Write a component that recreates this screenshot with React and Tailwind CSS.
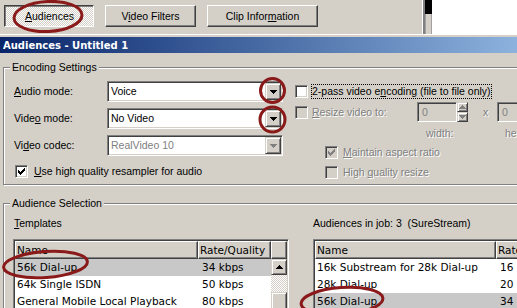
import React from "react";

const SUNKEN =
  "border border-t-[#808080] border-l-[#808080] border-b-white border-r-white shadow-[inset_1px_1px_0_#404040,inset_-1px_-1px_0_#d4d0c8]";
const RAISED =
  "border border-t-[#d4d0c8] border-l-[#d4d0c8] border-b-[#404040] border-r-[#404040] shadow-[inset_1px_1px_0_#fff,inset_-1px_-1px_0_#808080]";
const BUTTON =
  "border border-t-white border-l-white border-b-[#404040] border-r-[#404040] shadow-[inset_-1px_-1px_0_#808080]";
const HEADER =
  "border border-t-white border-l-white border-b-[#404040] border-r-[#404040] shadow-[inset_-1px_-1px_0_#808080]";
const DISABLED = "text-[#808080] [text-shadow:1px_1px_0_#fff]";
const LIST_FONT = "font-['DejaVu_Sans',Verdana,sans-serif] text-[10.5px]";

function U({ children }) {
  return <span className="underline underline-offset-[1px]">{children}</span>;
}

function DownArrow({ color = "#000" }) {
  return (
    <svg width="7" height="4" viewBox="0 0 7 4" shapeRendering="crispEdges">
      <path d="M0 0h7v1h-1v1h-1v1h-1v1h-1v-1h-1v-1h-1v-1h-1z" fill={color} />
    </svg>
  );
}

function UpArrow({ color = "#000" }) {
  return (
    <svg width="7" height="4" viewBox="0 0 7 4" shapeRendering="crispEdges">
      <path d="M3 0h1v1h1v1h1v1h1v1h-7v-1h1v-1h1v-1h1z" fill={color} />
    </svg>
  );
}

const CHECK_RECTS = [
  [6, 0, 1],
  [5, 1, 2],
  [0, 2, 1],
  [4, 2, 3],
  [0, 3, 2],
  [3, 3, 3],
  [0, 4, 5],
  [1, 5, 3],
  [2, 6, 1],
];

function Check({ checked, disabled }) {
  return (
    <span
      className={`flex h-[13px] w-[13px] shrink-0 items-center justify-center ${
        disabled ? "bg-[#d4d0c8]" : "bg-white"
      } ${SUNKEN}`}
    >
      {checked && (
        <svg width="7" height="7" viewBox="0 0 7 7" shapeRendering="crispEdges">
          {CHECK_RECTS.map(([x, y, w]) => (
            <rect
              key={`${x}-${y}`}
              x={x}
              y={y}
              width={w}
              height="1"
              fill={disabled ? "#808080" : "#000"}
            />
          ))}
        </svg>
      )}
    </span>
  );
}

function Combo({ value, disabled }) {
  return (
    <div className={`flex h-[21px] w-[176px] items-center bg-white pr-[1px] ${SUNKEN}`}>
      <span className={`flex-1 pl-[3px] ${disabled ? "text-[#808080]" : ""}`}>
        {value}
      </span>
      <span
        className={`flex h-[17px] w-[16px] items-center justify-center bg-[#d4d0c8] ${RAISED}`}
      >
        <DownArrow color={disabled ? "#808080" : "#000"} />
      </span>
    </div>
  );
}

function SpinEdit() {
  return (
    <div className="flex h-[20px]">
      <div className={`flex w-[40px] items-center bg-[#d4d0c8] pl-[4px] ${SUNKEN}`}>
        <span className="text-[#808080]">0</span>
      </div>
      <div className="flex w-[11px] flex-col">
        <span className={`flex h-[10px] items-center justify-center ${RAISED}`}>
          <UpArrow color="#808080" />
        </span>
        <span className={`flex h-[10px] items-center justify-center ${RAISED}`}>
          <DownArrow color="#808080" />
        </span>
      </div>
    </div>
  );
}

const TEMPLATES = [
  ["56k Dial-up", "34 kbps"],
  ["64k Single ISDN", "50 kbps"],
  ["General Mobile Local Playback", "80 kbps"],
];

const JOB_AUDIENCES = [
  ["16k Substream for 28k Dial-up", "16"],
  ["28k Dial-up", "20"],
  ["56k Dial-up", "34"],
];

export default function App() {
  return (
    <div className="relative h-[308px] w-[517px] overflow-hidden bg-[#d4d0c8] font-['Liberation_Sans',Arial,sans-serif] text-[10.5px] leading-[13px] text-black">
      {/* tab buttons */}
      <div className="flex h-[34px]">
        <div className="flex w-[422px] items-start gap-[11px] pl-[4px] pt-[5px]">
          <div className="flex h-[22px] w-[90px] items-center justify-center border border-t-[#404040] border-l-[#404040] border-b-white border-r-white bg-[repeating-conic-gradient(#ffffff_0_25%,#d4d0c8_0_50%)] bg-[length:2px_2px] pl-[1px] pt-[1px] shadow-[inset_1px_1px_0_#808080]">
            <span>
              <U>A</U>udiences
            </span>
          </div>
          <div className={`flex h-[22px] w-[91px] items-center justify-center ${BUTTON}`}>
            <span>
              V<U>i</U>deo Filters
            </span>
          </div>
          <div className={`flex h-[22px] w-[111px] items-center justify-center ${BUTTON}`}>
            <span>
              Clip Infor<U>m</U>ation
            </span>
          </div>
        </div>
        <div className="w-px bg-white" />
        <div className="w-[2px] bg-[#808080]" />
        <div className="flex w-[7px] flex-col">
          <div className="h-[14px] bg-black" />
          <div className="flex-1 border-x border-[#a0a0a0]" />
        </div>
        <div className="flex-1 bg-white" />
      </div>
      <div className="h-px bg-white" />
      <div className="h-[2px]" />

      {/* title bar */}
      <div className="flex h-[16px] w-[600px] items-center bg-linear-to-r from-[#0a246a] to-[#a6caf0] pl-[3px]">
        <span className="font-['DejaVu_Sans',Verdana,sans-serif] text-[10px] font-bold text-white">
          Audiences - Untitled 1
        </span>
      </div>

      {/* encoding settings */}
      <fieldset className="ml-[3px] mt-[8px] w-[560px] border border-[#808080] pb-[5px] shadow-[inset_1px_1px_0_#fff,1px_1px_0_#fff]">
        <legend className="ml-[6px] bg-[#d4d0c8] px-[2px]">Encoding Settings</legend>
        <div className="flex pt-[7px]">
          <div className="flex w-[279px] flex-col pl-[10px]">
            <div className="flex h-[21px] items-center">
              <span className="w-[93px]">
                <U>A</U>udio mode:
              </span>
              <Combo value="Voice" />
            </div>
            <div className="mt-[6px] flex h-[21px] items-center">
              <span className="w-[93px]">
                Vide<U>o</U> mode:
              </span>
              <Combo value="No Video" />
            </div>
            <div className="mt-[6px] flex h-[21px] items-center">
              <span className="w-[93px]">
                Vi<U>d</U>eo codec:
              </span>
              <Combo value="RealVideo 10" disabled />
            </div>
            <div className="mt-[9px] flex h-[13px] items-center gap-[6px] pl-[1px]">
              <Check checked />
              <span>
                <U>U</U>se high quality resampler for audio
              </span>
            </div>
          </div>

          <div className="ml-[12px] flex flex-col">
            <div className="flex h-[21px] items-center gap-[4px]">
              <Check />
              <span className="outline-1 outline-dotted outline-black">
                2-pass video e<U>n</U>coding (file to file only)
              </span>
            </div>
            <div className="flex h-[20px] items-center">
              <Check disabled />
              <span className={`ml-[4px] w-[105px] ${DISABLED}`}>
                <U>R</U>esize video to:
              </span>
              <SpinEdit />
              <span className={`ml-[15px] w-[14px] ${DISABLED}`}>x</span>
              <div className={`flex h-[20px] w-[60px] items-center bg-[#d4d0c8] pl-[4px] ${SUNKEN}`}>
                <span className="text-[#808080]">0</span>
              </div>
            </div>
            <div className="mt-[4px] flex h-[14px] items-center pl-[131px]">
              <span className={`w-[79px] ${DISABLED}`}>width:</span>
              <span className={DISABLED}>height:</span>
            </div>
            <div className="mt-[6px] flex h-[13px] items-center gap-[5px] pl-[30px]">
              <Check checked disabled />
              <span className={DISABLED}>
                <U>M</U>aintain aspect ratio
              </span>
            </div>
            <div className="mt-[7px] flex h-[13px] items-center gap-[5px] pl-[30px]">
              <Check disabled />
              <span className={DISABLED}>
                High <U>q</U>uality resize
              </span>
            </div>
          </div>
        </div>
      </fieldset>

      {/* audience selection */}
      <fieldset className="ml-[3px] mt-[12px] w-[560px] border border-[#808080] shadow-[inset_1px_1px_0_#fff,1px_1px_0_#fff]">
        <legend className="ml-[6px] bg-[#d4d0c8] px-[2px]">Audience Selection</legend>
        <div className="flex pt-[7px]">
          <div className="flex flex-col pl-[9px]">
            <span className="pl-[1px]">
              <U>T</U>emplates
            </span>
            <div className={`mt-[9px] h-[90px] w-[276px] bg-white p-[1px] ${SUNKEN} ${LIST_FONT}`}>
              <div className="flex h-[18px] bg-[#d4d0c8]">
                <div className={`flex w-[183px] items-center pl-[1px] ${HEADER}`}>Name</div>
                <div className={`flex w-[73px] items-center pl-[1px] ${HEADER}`}>Rate/Quality</div>
                <div className={`flex-1 ${HEADER}`} />
              </div>
              <div className="flex">
                <div className="w-[256px]">
                  {TEMPLATES.map(([name, rate], i) => (
                    <div
                      key={name}
                      className={`flex h-[17px] items-center ${i === 0 ? "bg-[#c8c8c8]" : ""}`}
                    >
                      <span className="w-[183px] pl-[2px]">{name}</span>
                      <span className="pl-[4px]">{rate}</span>
                    </div>
                  ))}
                </div>
                <div className="flex w-[16px] flex-col">
                  <span className={`flex h-[16px] items-center justify-center bg-[#d4d0c8] ${RAISED}`}>
                    <UpArrow />
                  </span>
                  <div className="h-[17px] bg-[repeating-conic-gradient(#ffffff_0_25%,#d4d0c8_0_50%)] bg-[length:2px_2px]" />
                  <div className={`h-[30px] bg-[#d4d0c8] ${RAISED}`} />
                </div>
              </div>
            </div>
          </div>

          <div className="ml-[24px] flex flex-col">
            <span className="whitespace-pre">Audiences in job: 3  (SureStream)</span>
            <div className={`mt-[9px] h-[90px] w-[260px] bg-white p-[1px] ${SUNKEN} ${LIST_FONT}`}>
              <div className="flex h-[18px] bg-[#d4d0c8]">
                <div className={`flex w-[181px] items-center pl-[1px] ${HEADER}`}>Name</div>
                <div className={`flex flex-1 items-center pl-[1px] ${HEADER}`}>Rate/Quality</div>
              </div>
              {JOB_AUDIENCES.map(([name, rate], i) => (
                <div
                  key={name}
                  className={`flex h-[17px] items-center ${i === 2 ? "bg-[#c8c8c8]" : ""}`}
                >
                  <span className="w-[181px] pl-[2px]">{name}</span>
                  <span className="pl-[4px]">{rate}</span>
                </div>
              ))}
            </div>
          </div>
        </div>
      </fieldset>

      {/* red annotation marks */}
      <svg
        className="pointer-events-none absolute inset-0"
        width="517"
        height="308"
        viewBox="0 0 517 308"
      >
        <g fill="none" stroke="#8a1a1a" strokeWidth="3">
          <ellipse cx="48" cy="16.5" rx="34" ry="15" transform="rotate(-3 48 16.5)" />
          <circle cx="272.5" cy="90.5" r="12" />
          <circle cx="272.5" cy="119.5" r="12.5" />
          <ellipse cx="45.5" cy="264.5" rx="42" ry="13" transform="rotate(-4 45.5 264.5)" />
          <ellipse cx="342" cy="301" rx="41" ry="13.5" transform="rotate(-4 342 301)" />
        </g>
      </svg>
    </div>
  );
}
